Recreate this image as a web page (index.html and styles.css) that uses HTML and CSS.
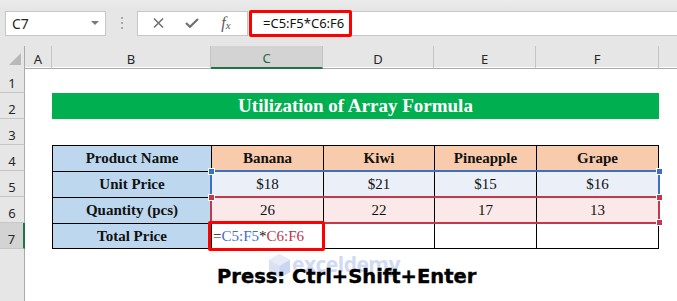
FILE: index.html
```html
<!doctype html>
<html>

<head>
  <meta name="viewport" content="width=device-width, initial-scale=1.0">
  <title>Array Formula</title>
  <link rel="stylesheet" href="styles.css">
</head>

<body>

  <div class="formula-bar">
    <div class="name-box"><span>C7</span><span class="caret"></span></div>
    <div class="grip"><i></i><i></i><i></i></div>
    <div class="fx-tools">
      <span class="tool">
        <svg width="11" height="10" viewBox="0 0 11 10"><path d="M1 0.5 L10 9.5 M10 0.5 L1 9.5" stroke="#707070" stroke-width="1.5" fill="none"/></svg>
      </span>
      <span class="tool">
        <svg width="14" height="10" viewBox="0 0 14 10"><path d="M1 5 L5 8.8 L13 1" stroke="#707070" stroke-width="2.2" fill="none"/></svg>
      </span>
      <span class="tool fx"><i>f</i><small>x</small></span>
    </div>
    <div class="formula-input"><span class="formula-text">=C5:F5*C6:F6</span></div>
  </div>

  <div class="sheet">
    <div class="row head">
      <div class="corner"><span></span></div>
      <div class="ch">A</div>
      <div class="ch">B</div>
      <div class="ch sel">C</div>
      <div class="ch">D</div>
      <div class="ch">E</div>
      <div class="ch">F</div>
      <div class="ch last"></div>
    </div>

    <div class="row">
      <div class="rh">1</div>
    </div>

    <div class="row">
      <div class="rh">2</div>
      <div></div>
      <div class="banner">Utilization of Array Formula</div>
    </div>

    <div class="row">
      <div class="rh">3</div>
    </div>

    <div class="row">
      <div class="rh">4</div>
      <div></div>
      <div class="tc label">Product Name</div>
      <div class="tc fruit">Banana</div>
      <div class="tc fruit">Kiwi</div>
      <div class="tc fruit">Pineapple</div>
      <div class="tc fruit end">Grape</div>
    </div>

    <div class="row">
      <div class="rh">5</div>
      <div></div>
      <div class="tc label">Unit Price</div>
      <div class="tc price">$18</div>
      <div class="tc price">$21</div>
      <div class="tc price">$15</div>
      <div class="tc price end">$16</div>
    </div>

    <div class="row">
      <div class="rh">6</div>
      <div></div>
      <div class="tc label">Quantity (pcs)</div>
      <div class="tc qty">26</div>
      <div class="tc qty">22</div>
      <div class="tc qty">17</div>
      <div class="tc qty end">13</div>
    </div>

    <div class="row last-row">
      <div class="rh sel">7</div>
      <div></div>
      <div class="tc label">Total Price</div>
      <div class="tc formula"><span>=</span><span class="ref-blue">C5:F5</span><span>*</span><span class="ref-red">C6:F6</span></div>
      <div class="tc"></div>
      <div class="tc"></div>
      <div class="tc end"></div>
    </div>

    <!-- watermark sits behind the caption -->
    <div class="watermark">
      <svg width="23" height="25" viewBox="0 0 23 25">
        <path d="M11.5 1 L22 7 L22 19 L11.5 25 L1 19 L1 7 Z" fill="#d3dcf2"/>
        <path d="M11.5 1 L22 7 L11.5 13 L1 7 Z" fill="#e3e9f7"/>
        <path d="M11.5 13 L22 7 L22 19 L11.5 25 Z" fill="#c3cfee"/>
      </svg>
      <span>exceldemy</span>
    </div>

    <div class="row rest">
      <div class="rh blank"></div>
      <div class="caption">Press: Ctrl+Shift+Enter</div>
    </div>

    <!-- range finder boxes drawn over the cells -->
    <div class="range blue-range"><b class="h tl"></b><b class="h tr"></b></div>
    <div class="range red-range"><b class="h tl"></b><b class="h tr"></b><b class="h br"></b></div>
    <div class="active-box"></div>
  </div>

</body>

</html>
```

FILE: styles.css
```css
* {
  margin: 0;
  padding: 0;
  box-sizing: border-box;
}

body {
  width: 677px;
  height: 301px;
  overflow: hidden;
  font: 13px "Noto Sans", Arial, sans-serif;
  color: #222;
  background: #fff;
}

/* formula bar */

.formula-bar {
  display: flex;
  align-items: center;
  height: 46px;
  padding-left: 5px;
  background: linear-gradient(#ececec 0, #e6e6e6 8px);
}

.name-box {
  width: 101px;
  height: 25px;
  background: #fff;
  border: 1px solid #c6c6c6;
  display: flex;
  align-items: center;
  justify-content: space-between;
  padding: 0 6px;
  font-size: 14px;
  color: #262626;
}

.caret {
  width: 0;
  height: 0;
  border-left: 4px solid transparent;
  border-right: 4px solid transparent;
  border-top: 4px solid #7a7a7a;
}

.grip {
  width: 31px;
  display: flex;
  flex-direction: column;
  align-items: center;
  gap: 3px;
}

.grip i {
  width: 2px;
  height: 2px;
  background: #a8a8a8;
}

.fx-tools {
  width: 111px;
  height: 25px;
  background: #fff;
  border: 1px solid #c6c6c6;
  display: flex;
  align-items: center;
  padding-left: 3px;
}

.tool {
  width: 34px;
  display: flex;
  justify-content: center;
  align-items: center;
}

.fx {
  font-family: "Liberation Serif", serif;
  color: #5a5a5a;
  font-size: 16px;
}

.fx small {
  font-size: 11px;
  font-style: italic;
  margin-top: 4px;
}

.formula-input {
  flex: 1;
  height: 25px;
  margin-left: 1px;
  background: #fff;
  border-top: 1px solid #c6c6c6;
  border-bottom: 1px solid #c6c6c6;
  display: flex;
  align-items: center;
}

.formula-text {
  width: 103px;
  height: 27px;
  border: 3px solid #ff0000;
  border-radius: 2px;
  padding-left: 11px;
  display: flex;
  align-items: center;
  font-size: 13px;
  color: #111;
}

/* sheet */

.sheet {
  position: relative;
}

.row {
  display: grid;
  grid-template-columns: 25px 27px 159px 112px 111px 102px 123px 1fr;
  height: 26px;
}

.row.head {
  height: 21px;
  background: #e6e6e6;
}

.corner {
  border-bottom: 1px solid #ababab;
  border-right: 1px solid #ababab;
  display: flex;
  justify-content: flex-end;
  align-items: flex-end;
  padding: 0 3px 3px 0;
}

.corner span {
  width: 0;
  height: 0;
  border-left: 12px solid transparent;
  border-bottom: 12px solid #b8b8b8;
}

.ch {
  border-bottom: 1px solid #ababab;
  border-right: 1px solid #c4c4c4;
  display: flex;
  align-items: center;
  justify-content: center;
  padding-top: 3px;
  color: #262626;
}

.ch.sel {
  background: #d3d3d3;
  color: #1e6b3f;
  border-bottom: 2px solid #217346;
}

.ch.last {
  border-right: 0;
}

.rh {
  background: #e6e6e6;
  border-right: 1px solid #ababab;
  border-bottom: 1px solid #c6c6c6;
  display: flex;
  align-items: center;
  justify-content: center;
  padding-top: 7px;
  color: #262626;
}

.rh.sel {
  background: #d3d3d3;
  border-right: 2px solid #217346;
}

.rh.blank {
  border-bottom: 0;
}

.banner {
  grid-column: span 5;
  background: #00b050;
  color: #fff;
  font: bold 19px "Liberation Serif", serif;
  display: flex;
  align-items: center;
  justify-content: center;
}

.tc {
  border-left: 1px solid #000;
  border-top: 1px solid #000;
  display: flex;
  align-items: center;
  justify-content: center;
  font: 15px "Liberation Serif", serif;
  color: #111;
}

.tc.end {
  border-right: 1px solid #000;
}

.last-row .tc {
  border-bottom: 1px solid #000;
}

.tc.label {
  background: #bdd7ee;
  font-weight: bold;
}

.tc.fruit {
  background: #f8cbad;
  font-weight: bold;
}

.tc.price {
  background: #eaeff8;
}

.tc.qty {
  background: #fbe9e9;
}

.tc.formula {
  justify-content: flex-start;
  padding-left: 1px;
}

.ref-blue {
  color: #3a6fd4;
}

.ref-red {
  color: #c2314a;
}

.row.rest {
  height: 52px;
}

.caption {
  grid-column: 2 / -1;
  position: relative;
  display: flex;
  align-items: center;
  padding: 2px 0 0 192px;
  font: bold 19.5px "DejaVu Sans", sans-serif;
  -webkit-text-stroke: 0.4px #000;
  color: #000;
}

/* overlays */

.range {
  position: absolute;
  left: 210px;
  width: 450px;
  height: 28px;
  border: 2px solid #3c6fc6;
}

.blue-range {
  top: 124px;
}

.red-range {
  top: 150px;
  border-color: #c5384a;
}

.h {
  position: absolute;
  width: 7px;
  height: 7px;
  background: #3c6fc6;
  border: 1px solid #fff;
}

.red-range .h {
  background: #c5384a;
}

.h.tl {
  left: -4px;
  top: -4px;
}

.h.tr {
  right: -5px;
  top: -4px;
}

.h.br {
  right: -5px;
  bottom: -4px;
}

.active-box {
  position: absolute;
  left: 208px;
  top: 175px;
  width: 117px;
  height: 30px;
  border: 3px solid #ff0000;
  border-radius: 2px;
}

.watermark {
  position: absolute;
  left: 268px;
  top: 207px;
  display: flex;
  align-items: center;
  gap: 1px;
  opacity: 0.85;
}

.watermark span {
  font: bold 21px "Open Sans", sans-serif;
  color: #c8d4f0;
  letter-spacing: -0.5px;
  margin-top: -4px;
}
```
